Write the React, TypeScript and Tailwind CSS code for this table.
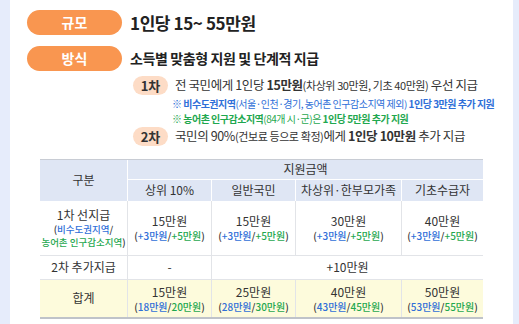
import React from "react";

const B = ({ children }: { children: React.ReactNode }) => (
  <span className="text-[#2f6fd8]">{children}</span>
);
const G = ({ children }: { children: React.ReactNode }) => (
  <span className="text-[#1fa84f]">{children}</span>
);

const Sub = ({ a, b }: { a: string; b: string }) => (
  <div className="text-[10px] leading-[13px] text-[#333] font-medium">
    (<B>{a}</B>/<G>{b}</G>)
  </div>
);

export default function App() {
  const font = { fontFamily: '"Noto Sans CJK KR", "Noto Sans", sans-serif' };
  return (
    <div className="w-[519px] h-[324px] bg-[#e6ecfb] flex overflow-hidden" style={font}>
      <div className="ml-[10px] w-[503px] h-full bg-white flex flex-col">
        <div className="flex items-center mt-[10px] ml-[17px]">
          <div className="w-[95px] h-[25px] rounded-full bg-[#f99650] text-white text-[14px] font-bold flex items-center justify-center">
            규모
          </div>
          <div className="ml-[8px] text-[17px] font-bold text-[#222] tracking-[-0.4px]">1인당 15~ 55만원</div>
        </div>
        <div className="flex items-center mt-[10px] ml-[17px]">
          <div className="w-[95px] h-[25px] rounded-full bg-[#f99650] text-white text-[14px] font-bold flex items-center justify-center">
            방식
          </div>
          <div className="ml-[8px] text-[14px] font-bold text-[#222] tracking-[-0.4px]">소득별 맞춤형 지원 및 단계적 지급</div>
        </div>

        <div className="ml-[123px] mt-[5px] flex flex-col">
          <div className="flex items-center h-[20px]">
            <div className="w-[35px] h-[19px] rounded-full bg-[#fddcc6] text-[13px] font-bold text-[#333] flex items-center justify-center">1차</div>
            <div className="ml-[7px] text-[12.5px] text-[#333] tracking-[-0.4px]">
              전 국민에게 1인당 <b>15만원</b><span className="text-[11px]">(차상위 30만원, 기초 40만원)</span> 우선 지급
            </div>
          </div>
          <div className="ml-[39px] mt-[1px] text-[10px] leading-[14px] text-[#2f6fd8] tracking-[-0.5px]">
            ※ <b>비수도권지역</b>(서울·인천·경기, 농어촌 인구감소지역 제외) <b>1인당 3만원 추가 지원</b>
          </div>
          <div className="ml-[39px] mt-[1px] text-[10px] leading-[14px] text-[#1fa84f] tracking-[-0.5px]">
            ※ <b>농어촌 인구감소지역</b>(84개 시·군)은 <b>1인당 5만원 추가 지원</b>
          </div>
          <div className="flex items-center h-[20px] mt-[1px]">
            <div className="w-[35px] h-[19px] rounded-full bg-[#fddcc6] text-[13px] font-bold text-[#333] flex items-center justify-center">2차</div>
            <div className="ml-[7px] text-[12.5px] text-[#333] tracking-[-0.4px]">
              국민의 90%<span className="text-[11px]">(건보료 등으로 확정)</span>에게 <b>1인당 10만원</b> 추가 지급
            </div>
          </div>
        </div>

        <div className="ml-[30px] mt-[12px] w-[443px] border-t border-[#c8ccd4] border-b-2 border-b-[#bfc3c9]">
          <div className="grid grid-cols-[88px_84px_84px_106px_81px] text-center text-[#333] text-[12px]">
            <div className="row-span-2 bg-[#dfe6f4] flex items-center justify-center border-r border-white">구분</div>
            <div className="col-span-4 bg-[#dfe6f4] h-[20px] flex items-center justify-center border-b border-white">지원금액</div>
            <div className="bg-[#dfe6f4] h-[21px] flex items-center justify-center border-r border-white">상위 10%</div>
            <div className="bg-[#dfe6f4] h-[21px] flex items-center justify-center border-r border-white">일반국민</div>
            <div className="bg-[#dfe6f4] h-[21px] flex items-center justify-center border-r border-white">차상위·한부모가족</div>
            <div className="bg-[#dfe6f4] h-[21px] flex items-center justify-center">기초수급자</div>

            <div className="h-[55px] flex flex-col items-center justify-center border-r border-b border-[#e2e4e8]">
              <div className="leading-[17px]">1차 선지급</div>
              <div className="text-[9.5px] leading-[13px] font-medium">(<B>비수도권지역</B>/</div>
              <div className="text-[9.5px] leading-[13px] font-medium"><G>농어촌 인구감소지역</G>)</div>
            </div>
            {["15만원", "15만원", "30만원", "40만원"].map((v, i) => (
              <div key={i} className={`h-[55px] flex flex-col items-center justify-center border-b border-[#e2e4e8] ${i < 3 ? "border-r" : ""}`}>
                <div className="leading-[16px]">{v}</div>
                <Sub a="+3만원" b="+5만원" />
              </div>
            ))}

            <div className="h-[23px] flex items-center justify-center border-r border-[#e2e4e8]">2차 추가지급</div>
            <div className="h-[23px] flex items-center justify-center border-r border-[#e2e4e8]">-</div>
            <div className="col-span-3 h-[23px] flex items-center justify-center">+10만원</div>

            <div className="h-[38px] bg-[#fdfbdc] flex items-center justify-center border-r border-t border-[#e2e4e8]">합계</div>
            {[
              ["15만원", "18만원", "20만원"],
              ["25만원", "28만원", "30만원"],
              ["40만원", "43만원", "45만원"],
              ["50만원", "53만원", "55만원"],
            ].map(([v, a, b], i) => (
              <div key={i} className={`h-[38px] bg-[#fdfbdc] flex flex-col items-center justify-center border-t border-[#e2e4e8] ${i < 3 ? "border-r" : ""}`}>
                <div className="leading-[16px]">{v}</div>
                <Sub a={a} b={b} />
              </div>
            ))}
          </div>
        </div>
      </div>
    </div>
  );
}
